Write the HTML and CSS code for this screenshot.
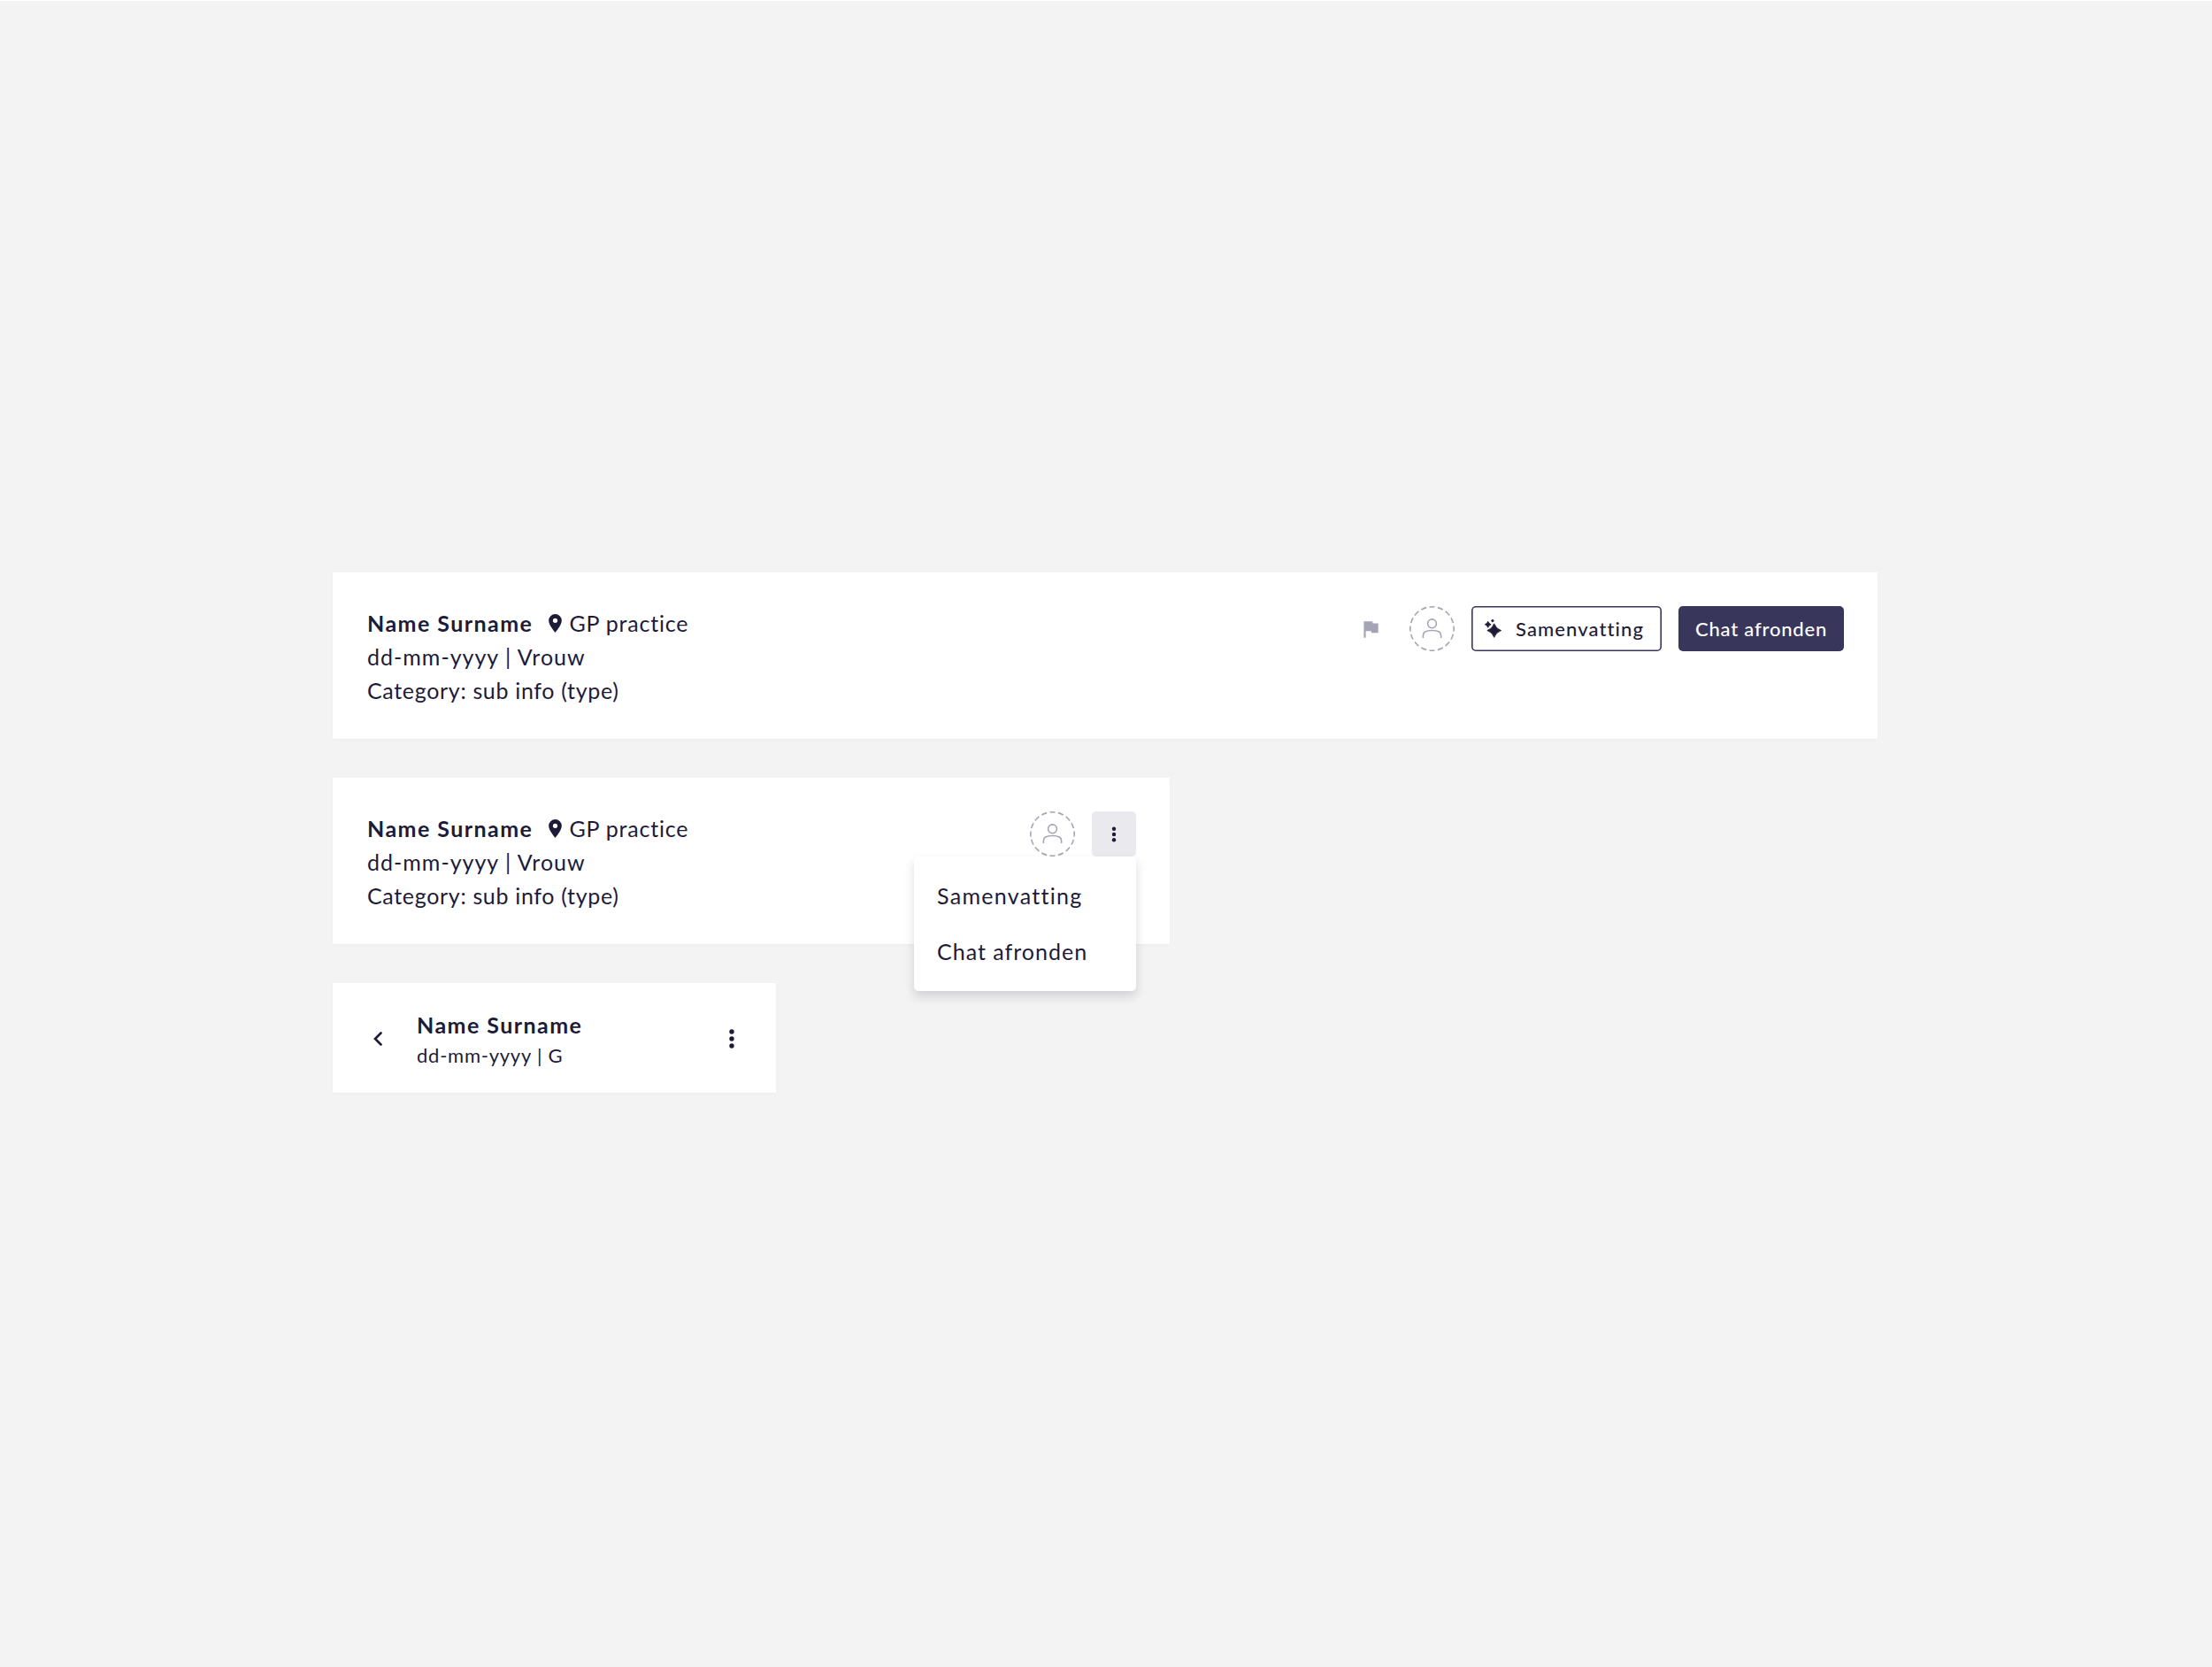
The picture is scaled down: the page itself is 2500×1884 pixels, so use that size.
FILE: index.html
```
<!DOCTYPE html>
<html lang="nl">
<head>
  <meta charset="utf-8">
  <title>Chat header</title>
  <meta name="viewport" content="width=device-width,initial-scale=1">
  <link rel="stylesheet" href="styles.css">
</head>
<body>
  <main class="page">

    <!-- Desktop -->
    <header class="card card-desktop">
      <div class="patient">
        <div class="line">
          <span class="name">Name Surname</span>
          <svg class="pin" viewBox="0 0 14 20"><path fill-rule="evenodd" d="M7 0a7 7 0 0 0-7 7c0 5.200 7 13 7 13s7-7.800 7-13a7 7 0 0 0-7-7zm0 4.500a2.500 2.500 0 1 1 0 5 2.500 2.500 0 0 1 0-5z"/></svg>
          <span class="practice">GP practice</span>
        </div>
        <div class="line birth">dd-mm-yyyy | Vrouw</div>
        <div class="line category">Category: sub info (type)</div>
      </div>
      <div class="actions">
        <button class="icon-button">
          <svg class="flag" viewBox="0 0 24 24"><path d="M14.400 6L14 4H5v17h2v-7h5.600l.4 2h7V6z"/></svg>
        </button>
        <svg class="avatar" viewBox="0 0 51 51">
          <circle class="ring" cx="25.500" cy="25.500" r="24.700" pathLength="160"/>
          <circle cx="25.500" cy="19.800" r="4.900"/>
          <path d="M15.400 36v-3c0-4 3.200-5.500 10.100-5.500s10.100 1.500 10.100 5.500v3"/>
        </svg>
        <button class="button button-outline">
          <svg class="sparkle" viewBox="0 0 18 21"><path d="M10.700 4.800Q12.800 10.600 18.600 12.600Q12.800 14.600 10.700 20.400Q8.600 14.600 2.800 12.600Q8.600 10.600 10.700 4.800zM3.700 2.300Q4.600 5 7.200 5.800Q4.600 6.600 3.700 9.300Q2.800 6.600 .3 5.800Q2.800 5 3.700 2.300z"/><circle cx="8.900" cy="1.600" r="1.200"/></svg>
          <span class="button-text">Samenvatting</span>
        </button>
        <button class="button button-solid">Chat afronden</button>
      </div>
    </header>

    <!-- Tablet, menu opened -->
    <header class="card card-tablet">
      <div class="patient">
        <div class="line">
          <span class="name">Name Surname</span>
          <svg class="pin" viewBox="0 0 14 20"><path fill-rule="evenodd" d="M7 0a7 7 0 0 0-7 7c0 5.200 7 13 7 13s7-7.800 7-13a7 7 0 0 0-7-7zm0 4.500a2.500 2.500 0 1 1 0 5 2.500 2.500 0 0 1 0-5z"/></svg>
          <span class="practice">GP practice</span>
        </div>
        <div class="line birth">dd-mm-yyyy | Vrouw</div>
        <div class="line category">Category: sub info (type)</div>
      </div>
      <div class="actions">
        <svg class="avatar" viewBox="0 0 51 51">
          <circle class="ring" cx="25.500" cy="25.500" r="24.700" pathLength="160"/>
          <circle cx="25.500" cy="19.800" r="4.900"/>
          <path d="M15.400 36v-3c0-4 3.200-5.500 10.100-5.500s10.100 1.500 10.100 5.500v3"/>
        </svg>
        <div class="dropdown">
          <button class="icon-button is-open">
            <svg class="dots" viewBox="0 0 6 18"><circle cx="3" cy="2.700" r="2.200"/><circle cx="3" cy="9" r="2.200"/><circle cx="3" cy="15.300" r="2.200"/></svg>
          </button>
          <ul class="menu">
            <li class="menu-summary">Samenvatting</li>
            <li>Chat afronden</li>
          </ul>
        </div>
      </div>
    </header>

    <!-- Mobile -->
    <header class="card card-mobile">
      <svg class="chevron" viewBox="0 0 10 16"><path d="M8.500 1.500L2 8l6.500 6.500"/></svg>
      <div class="patient-small">
        <div class="line name">Name Surname</div>
        <div class="details">dd-mm-yyyy | G</div>
      </div>
      <svg class="dots-large" viewBox="0 0 6 22"><circle cx="3" cy="3" r="2.700"/><circle cx="3" cy="11" r="2.700"/><circle cx="3" cy="19" r="2.700"/></svg>
    </header>

  </main>
</body>
</html>
```
FILE: styles.css
```
* {
  box-sizing: border-box;
}

body {
  margin: 0;
  min-height: 1884px;
  border-top: 1px solid #fff;
  background: #f3f3f3;
  color: #1e1b39;
  font-family: Lato, sans-serif;
  font-size: 25px;
}

.page {
  display: flex;
  flex-direction: column;
  align-items: flex-start;
  gap: 44px;
  padding: 646px 376px 0;
}

.card {
  display: flex;
  justify-content: space-between;
  background: #fff;
  box-shadow: 0 1px 3px rgba(0, 0, 0, 0.03);
}

.card-desktop,
.card-tablet {
  align-items: flex-start;
  height: 188px;
  padding: 38px 38px 38px 39px;
}

.card-desktop {
  width: 1746px;
}

.card-tablet {
  width: 946px;
}

.card-mobile {
  align-items: center;
  width: 501px;
  height: 124px;
  padding: 2px 47px 0 46px;
}

.line {
  display: flex;
  align-items: center;
  height: 38px;
  line-height: 38px;
  white-space: nowrap;
}

.name {
  font-weight: 700;
  letter-spacing: 1.45px;
}

.practice {
  letter-spacing: 0.8px;
}

.birth {
  letter-spacing: 1px;
}

.category {
  letter-spacing: 0.67px;
}

.pin {
  width: 15px;
  height: 21px;
  margin: 0 8px 0 18px;
  fill: #1e1b39;
}

.actions {
  display: flex;
  align-items: center;
  gap: 19px;
}

button {
  display: flex;
  align-items: center;
  justify-content: center;
  height: 51px;
  padding: 0;
  border: 0;
  border-radius: 5px;
  background: none;
  color: inherit;
  font: inherit;
}

.icon-button {
  width: 51px;
}

.icon-button.is-open {
  width: 50px;
  background: #eaeaee;
}

.flag {
  width: 26px;
  height: 26px;
  fill: #a5a4b5;
}

.avatar {
  width: 51px;
  height: 51px;
  fill: none;
  stroke: #a5a4b3;
  stroke-width: 1.6;
}

.ring {
  stroke-dasharray: 6.4 3.6;
  stroke-dashoffset: 3.2;
}

.button {
  font-size: 22px;
  font-weight: 500;
  letter-spacing: 0.8px;
}

.button-outline {
  justify-content: flex-start;
  gap: 17px;
  width: 215px;
  padding-left: 15px;
  box-shadow: inset 0 0 0 1.6px #39365b;
}

.button-text {
  letter-spacing: 1.1px;
}

.button-solid {
  width: 187px;
  background: #39365b;
  color: #fff;
}

.sparkle {
  width: 18px;
  height: 21px;
  margin-top: -1px;
  overflow: visible;
  fill: #1e1b39;
  stroke: #1e1b39;
  stroke-width: 0.8;
  stroke-linejoin: round;
}

.dropdown {
  position: relative;
}

.dots {
  width: 6px;
  height: 18px;
  fill: #1e1b39;
}

.menu {
  position: absolute;
  top: 100%;
  right: 0;
  width: 251px;
  margin: 0;
  padding: 13px 0;
  border-radius: 5px;
  background: #fff;
  box-shadow: 0 6px 12px rgba(30, 27, 57, 0.16);
  list-style: none;
}

.menu li {
  padding: 0 26px;
  line-height: 63px;
  letter-spacing: 1px;
}

.menu .menu-summary {
  letter-spacing: 1.3px;
}

.chevron {
  width: 10px;
  height: 16px;
  fill: none;
  stroke: #1e1b39;
  stroke-width: 2.6;
  stroke-linecap: round;
}

.patient-small {
  flex: 1;
  margin-left: 39px;
}

.details {
  font-size: 22px;
  line-height: 32px;
  letter-spacing: 0.75px;
}

.dots-large {
  width: 6px;
  height: 22px;
  fill: #1e1b39;
}
```
